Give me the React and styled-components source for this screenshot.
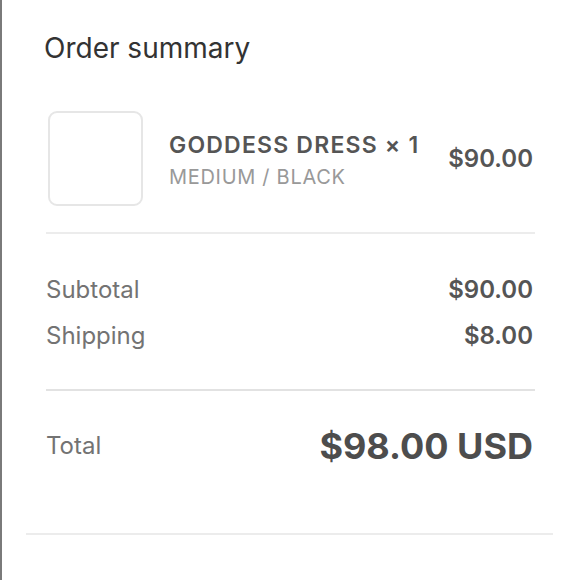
import React from 'react';
import styled, { createGlobalStyle } from 'styled-components';

const GlobalStyle = createGlobalStyle`
  html, body {
    margin: 0;
    padding: 0;
    background: #ffffff;
  }
  body {
    font-family: Inter, "Liberation Sans", Arial, sans-serif;
  }
`;

const App = () => {
  return (
    <>
      <GlobalStyle />
      <Page>
        <Content>
          <Title>Order summary</Title>
          <LineItem>
            <Thumb />
            <Details>
              <ItemName>GODDESS DRESS × 1</ItemName>
              <Variant>MEDIUM / BLACK</Variant>
            </Details>
            <ItemPrice>$90.00</ItemPrice>
          </LineItem>
          <Divider />
          <Rows>
            <Row>
              <Label>Subtotal</Label>
              <Value>$90.00</Value>
            </Row>
            <Row>
              <Label>Shipping</Label>
              <Value>$8.00</Value>
            </Row>
          </Rows>
          <Divider $strong />
          <TotalRow>
            <Label>Total</Label>
            <TotalValue>$98.00 USD</TotalValue>
          </TotalRow>
        </Content>
        <BottomRule />
      </Page>
    </>
  );
};

export default App;

const Page = styled.div`
  height: 580px;
  box-sizing: border-box;
  border-left: 2px solid #7a7a7a;
  display: flex;
  flex-direction: column;
  overflow: hidden;
`;

const Content = styled.div`
  padding: 0 47px 0 42px;
  display: flex;
  flex-direction: column;
`;

const Title = styled.h2`
  margin: 31px 0 0;
  font-size: 28px;
  line-height: 34px;
  font-weight: 400;
  color: #333333;
`;

const LineItem = styled.div`
  margin-top: 46px;
  display: flex;
  align-items: center;
`;

const Thumb = styled.div`
  width: 95px;
  height: 95px;
  margin-left: 4px;
  box-sizing: border-box;
  border: 2px solid #e6e6e6;
  border-radius: 9px;
  flex-shrink: 0;
`;

const Details = styled.div`
  margin-left: 26px;
  padding-top: 4px;
  flex: 1;
  display: flex;
  flex-direction: column;
  gap: 6px;
`;

const ItemName = styled.div`
  font-size: 23px;
  line-height: 26px;
  font-weight: 600;
  letter-spacing: 1.2px;
  color: #555555;
`;

const Variant = styled.div`
  font-size: 20px;
  line-height: 26px;
  letter-spacing: 0.7px;
  color: #999999;
`;

const ItemPrice = styled.div`
  font-size: 24px;
  line-height: 26px;
  font-weight: 600;
  color: #555555;
`;

const Divider = styled.div`
  height: 2px;
  margin-top: ${(p) => (p.$strong ? '38px' : '26px')};
  margin-left: 2px;
  margin-right: -2px;
  background: ${(p) => (p.$strong ? '#e2e2e2' : '#ececec')};
`;

const Rows = styled.div`
  margin-top: 41px;
  display: flex;
  flex-direction: column;
  gap: 16px;
`;

const Row = styled.div`
  display: flex;
  justify-content: space-between;
  align-items: center;
  line-height: 30px;
  padding-left: 2px;
`;

const Label = styled.span`
  font-size: 24px;
  color: #737373;
`;

const Value = styled.span`
  font-size: 24px;
  font-weight: 600;
  color: #555555;
`;

const TotalRow = styled.div`
  margin-top: 35px;
  display: flex;
  justify-content: space-between;
  align-items: center;
  line-height: 40px;
  padding-left: 2px;
`;

const TotalValue = styled.span`
  font-size: 36px;
  font-weight: 700;
  color: #4d4d4d;
`;

const BottomRule = styled.div`
  height: 2px;
  margin: 67px 27px 0 24px;
  background: #ececec;
`;
